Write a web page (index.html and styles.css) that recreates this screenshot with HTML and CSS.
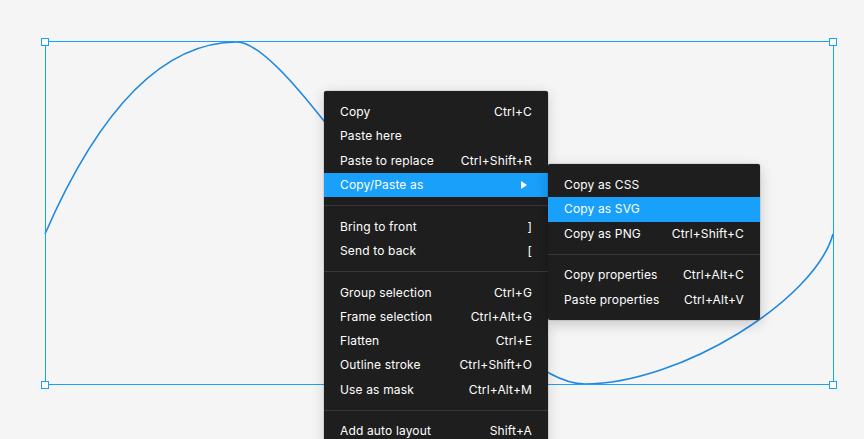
FILE: index.html
```html
<!DOCTYPE html>
<html>
<head>
<meta charset="utf-8">
<link rel="stylesheet" href="styles.css">
</head>
<body>
<div class="canvas">
  <svg class="art" width="864" height="439" viewBox="0 0 864 439">
    <path class="curve" d="M45,234 C105,96 170,42 237,42 C300,42 480,384 585,384 C680,384 815,300 833,234"/>
    <rect class="frame" x="45.5" y="41.5" width="788" height="343"/>
    <rect class="handle" x="41.5" y="38.5" width="7" height="7"/>
    <rect class="handle" x="829.5" y="38.5" width="7" height="7"/>
    <rect class="handle" x="41.5" y="381.5" width="7" height="7"/>
    <rect class="handle" x="829.5" y="381.5" width="7" height="7"/>
  </svg>

  <div class="menu main">
    <div class="item"><span>Copy</span><span class="sc">Ctrl+C</span></div>
    <div class="item"><span>Paste here</span></div>
    <div class="item"><span>Paste to replace</span><span class="sc">Ctrl+Shift+R</span></div>
    <div class="item active"><span>Copy/Paste as</span><span class="arrow"></span></div>
    <div class="sep"></div>
    <div class="item"><span>Bring to front</span><span class="sc">]</span></div>
    <div class="item"><span>Send to back</span><span class="sc">[</span></div>
    <div class="sep"></div>
    <div class="item"><span>Group selection</span><span class="sc">Ctrl+G</span></div>
    <div class="item"><span>Frame selection</span><span class="sc">Ctrl+Alt+G</span></div>
    <div class="item"><span>Flatten</span><span class="sc">Ctrl+E</span></div>
    <div class="item"><span>Outline stroke</span><span class="sc">Ctrl+Shift+O</span></div>
    <div class="item"><span>Use as mask</span><span class="sc">Ctrl+Alt+M</span></div>
    <div class="sep"></div>
    <div class="item"><span>Add auto layout</span><span class="sc">Shift+A</span></div>
  </div>

  <div class="menu sub">
    <div class="item"><span>Copy as CSS</span></div>
    <div class="item active"><span>Copy as SVG</span></div>
    <div class="item"><span>Copy as PNG</span><span class="sc">Ctrl+Shift+C</span></div>
    <div class="sep"></div>
    <div class="item"><span>Copy properties</span><span class="sc">Ctrl+Alt+C</span></div>
    <div class="item"><span>Paste properties</span><span class="sc">Ctrl+Alt+V</span></div>
  </div>
</div>
</body>
</html>
```

FILE: styles.css
```css
html, body {
  margin: 0;
  padding: 0;
  width: 864px;
  height: 439px;
  overflow: hidden;
  background: #f5f5f5;
}

.canvas {
  position: relative;
  width: 864px;
  height: 439px;
  background: #f5f5f5;
  font-family: Inter, "Noto Sans", sans-serif;
}

.art {
  position: absolute;
  left: 0;
  top: 0;
}

.curve {
  fill: none;
  stroke: #1d88e2;
  stroke-width: 1.6;
}

.frame {
  fill: none;
  stroke: #18a0fb;
  stroke-width: 1;
}

.handle {
  fill: #ffffff;
  stroke: #18a0fb;
  stroke-width: 1;
}

.menu {
  position: absolute;
  background: #1e1e1e;
  border-radius: 2px;
  color: #ffffff;
  font-size: 12px;
  letter-spacing: 0.15px;
  box-shadow: 0 2px 14px rgba(0, 0, 0, 0.15), 0 0 0 0.5px rgba(0, 0, 0, 0.15);
  display: flex;
  flex-direction: column;
}

.main {
  left: 324px;
  top: 91px;
  width: 224px;
  padding: 9px 0 8px;
}

.sub {
  left: 548px;
  top: 164px;
  width: 212px;
  padding: 9px 0 8px;
  box-shadow: 0 4px 14px rgba(0, 0, 0, 0.2), 0 0 0 0.5px rgba(0, 0, 0, 0.15);
}

.item {
  height: 24.25px;
  line-height: 24px;
  padding: 0 16px;
  display: flex;
  justify-content: space-between;
  align-items: center;
  white-space: nowrap;
  flex-shrink: 0;
}

.item.active {
  background: #18a0fb;
}

.sc {
  color: #ffffff;
}

.arrow {
  width: 0;
  height: 0;
  border-top: 4px solid transparent;
  border-bottom: 4px solid transparent;
  border-left: 6px solid #ffffff;
  margin-right: 5px;
}

.sep {
  height: 1px;
  background: #383838;
  margin: 8.25px 0;
  flex-shrink: 0;
}
```
